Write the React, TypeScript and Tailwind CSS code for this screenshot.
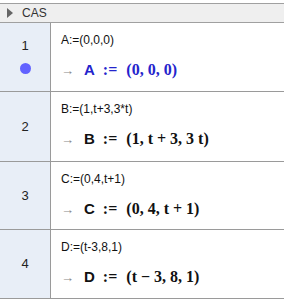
import React from "react";

const sans = { fontFamily: '"Liberation Sans", Arial, sans-serif' };
const serif = { fontFamily: '"Liberation Serif", "Times New Roman", serif' };

function Row({
  n,
  h,
  input,
  name,
  tuple,
  blue,
}: {
  n: string;
  h: string;
  input: string;
  name: string;
  tuple: React.ReactNode;
  blue?: boolean;
}) {
  return (
    <div className={`flex border-b border-[#9a9a9a] ${h}`}>
      <div className="w-[51px] shrink-0 bg-[#e8eef7] border-r border-[#9a9a9a] flex flex-col items-center">
        {blue ? (
          <>
            <div className="mt-[15px] text-[13px] leading-[15px] text-[#222]" style={sans}>
              {n}
            </div>
            <div className="mt-[10px] w-[11px] h-[11px] rounded-full bg-[#6262ff]" />
          </>
        ) : (
          <div className="flex-1 flex items-center text-[13px] text-[#222]" style={sans}>
            {n}
          </div>
        )}
      </div>
      <div className="flex-1 flex flex-col pl-[10px]">
        <div className="mt-[10px] text-[12px] leading-[14px] text-[#111]" style={sans}>
          {input}
        </div>
        <div className={`mt-[12px] flex items-center h-[22px] ${blue ? "text-[#2424cc]" : "text-[#111]"}`}>
          <span className="text-[13px] text-[#888] w-[23px] leading-none" style={sans}>
            →
          </span>
          <span className="text-[15px] font-bold" style={sans}>
            {name}
          </span>
          <span className="text-[16px] font-bold ml-[8px]" style={serif}>
            :=
          </span>
          <span className="text-[16px] font-bold ml-[9px]" style={serif}>
            {tuple}
          </span>
        </div>
      </div>
    </div>
  );
}

export default function App() {
  return (
    <div className="w-[284px] h-[300px] bg-white overflow-hidden">
      <div className="mt-[3px] h-[20px] bg-[#efefef] border-y border-[#a0a0a0] flex items-center">
        <svg width="6" height="10" viewBox="0 0 6 10" className="ml-[7px]">
          <polygon points="0,0 6,5 0,10" fill="#666" />
        </svg>
        <span className="ml-[9px] text-[12px] text-[#333]" style={sans}>
          CAS
        </span>
      </div>
      <Row
        n="1"
        h="h-[69px]"
        input="A:=(0,0,0)"
        name="A"
        blue
        tuple={<>(0, 0, 0)</>}
      />
      <Row
        n="2"
        h="h-[70px]"
        input="B:=(1,t+3,3*t)"
        name="B"
        tuple={<>(1, t + 3, 3 t)</>}
      />
      <Row
        n="3"
        h="h-[68px]"
        input="C:=(0,4,t+1)"
        name="C"
        tuple={<>(0, 4, t + 1)</>}
      />
      <Row
        n="4"
        h="h-[69px]"
        input="D:=(t-3,8,1)"
        name="D"
        tuple={<>(t − 3, 8, 1)</>}
      />
    </div>
  );
}
